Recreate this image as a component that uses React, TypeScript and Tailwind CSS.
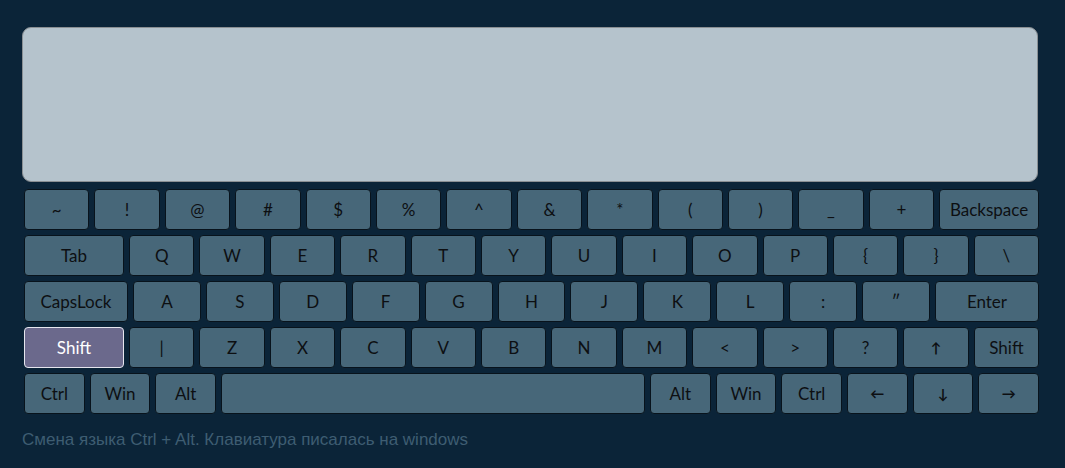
const rows: { label: string; w?: string }[][] = [
  [
    { label: "~" }, { label: "!" }, { label: "@" }, { label: "#" }, { label: "$" },
    { label: "%" }, { label: "^" }, { label: "&" }, { label: "*" }, { label: "(" },
    { label: ")" }, { label: "_" }, { label: "+" }, { label: "Backspace", w: "w-[100px]" },
  ],
  [
    { label: "Tab", w: "w-[100px]" }, { label: "Q" }, { label: "W" }, { label: "E" },
    { label: "R" }, { label: "T" }, { label: "Y" }, { label: "U" }, { label: "I" },
    { label: "O" }, { label: "P" }, { label: "{" }, { label: "}" }, { label: "\\" },
  ],
  [
    { label: "CapsLock", w: "w-[104px]" }, { label: "A" }, { label: "S" }, { label: "D" },
    { label: "F" }, { label: "G" }, { label: "H" }, { label: "J" }, { label: "K" },
    { label: "L" }, { label: ":" }, { label: "\u2033" }, { label: "Enter", w: "w-[104px]" },
  ],
  [
    { label: "Shift", w: "w-[100px]" }, { label: "|" }, { label: "Z" }, { label: "X" },
    { label: "C" }, { label: "V" }, { label: "B" }, { label: "N" }, { label: "M" },
    { label: "<" }, { label: ">" }, { label: "?" }, { label: "\u2191" }, { label: "Shift" },
  ],
  [
    { label: "Ctrl" }, { label: "Win" }, { label: "Alt" }, { label: "", w: "w-[424px]" },
    { label: "Alt" }, { label: "Win" }, { label: "Ctrl" }, { label: "\u2190" },
    { label: "\u2193" }, { label: "\u2192" },
  ],
];

const arrows = ["\u2190", "\u2191", "\u2192", "\u2193"];

const Key = ({ label, w, active }: { label: string; w?: string; active?: boolean }) => (
  <div
    className={`${w ? `${w} shrink-0` : "flex-1 min-w-0"} h-[41px] flex items-center justify-center rounded-[4px] border ${
      arrows.includes(label) ? "text-[14px] font-bold" : "text-[17px]"
    } ${
      active
        ? "bg-[#6b698c] border-[#e6e6ee] text-white"
        : "bg-[#476779] border-[#08131c] text-[#0d0f12]"
    }`}
  >
    {label}
  </div>
);

export default function App() {
  return (
    <div className="w-[1065px] h-[468px] bg-[#0b2438] pt-[27px] pl-[22px] overflow-hidden">
      <div className="w-[1016px] h-[155px] rounded-[9px] border border-[#8a8f93] bg-[#b5c3cc]" />
      <div
        className="w-[1015px] ml-[2px] mt-[7px] flex flex-col gap-[5px]"
        style={{ fontFamily: "Lato, 'Open Sans', sans-serif" }}
      >
        {rows.map((row, i) => (
          <div key={i} className="flex gap-[5px]">
            {row.map((k, j) => (
              <Key key={j} label={k.label} w={k.w} active={i === 3 && j === 0} />
            ))}
          </div>
        ))}
      </div>
      <p
        className="mt-[13px] text-[17px] text-[#3e5d72]"
        style={{ fontFamily: "'Liberation Sans', Arial, sans-serif" }}
      >
        Смена языка Ctrl + Alt. Клавиатура писалась на windows
      </p>
    </div>
  );
}
